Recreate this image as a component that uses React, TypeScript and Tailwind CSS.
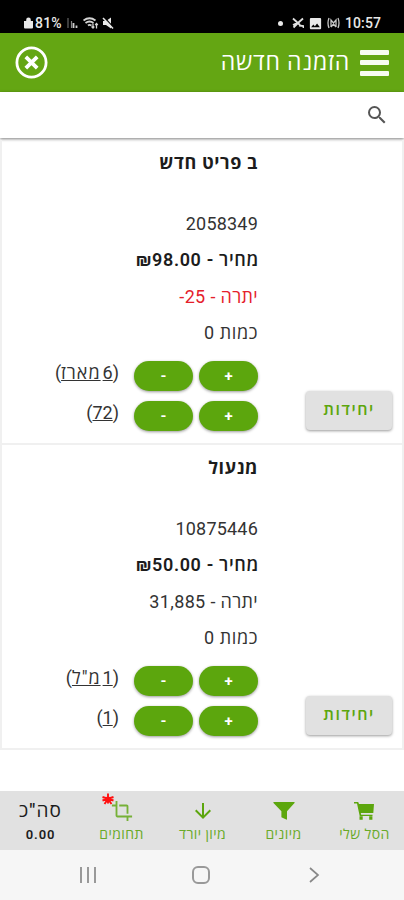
import { type ReactNode } from "react"
import { MdCrop, MdSearch, MdArrowDownward, MdImage } from "react-icons/md"

interface Pack {
  count: string
  unit?: string
}

interface Product {
  name: string
  sku: string
  price: string
  balance: string
  negative?: boolean
  packs: Pack[]
}

const products: Product[] = [
  {
    name: "ב פריט חדש",
    sku: "2058349",
    price: "₪98.00",
    balance: "25-",
    negative: true,
    packs: [{ count: "6", unit: "מארז" }, { count: "72" }],
  },
  {
    name: "מנעול",
    sku: "10875446",
    price: "₪50.00",
    balance: "31,885",
    packs: [{ count: "1", unit: 'מ"ל' }, { count: "1" }],
  },
]

function StatusBar() {
  return (
    <div dir="ltr" className="flex h-[33px] items-center justify-between bg-black pl-6 pr-[22px] pt-[13px] text-[14px] font-medium text-[#e8e8e8]">
      <div className="flex items-center">
        <svg width="9" height="12" viewBox="0 0 9 12" fill="#e8e8e8">
          <path d="M2.2 4V2.8a2.3 2.3 0 0 1 4.6 0V4H9v6.5a1 1 0 0 1-1 1H1a1 1 0 0 1-1-1V4z" />
        </svg>
        <span className="ml-[2px] w-[28px] tracking-[0.2px]">81%</span>
        <svg className="ml-[4px]" width="12" height="12" viewBox="0 0 12 12">
          <path d="M1 1v10" stroke="#666" strokeWidth="1.2" />
          <path d="M4.5 4v7" stroke="#888" strokeWidth="1.2" />
          <path d="M6.5 6v5M9.5 8.5v2.5" stroke="#ccc" strokeWidth="1.8" />
        </svg>
        <svg className="ml-[4px]" width="16" height="12" viewBox="0 0 16 12" fill="none" stroke="#d5d5d5">
          <path d="M0.5 3.5q6-4.5 12 0M2.5 6q4-3 8 0M5 8.5q1.5-1.3 3.5 0" strokeWidth="1.8" />
          <path d="M10 6.5v5M8.5 9.5l1.5 1.5 1.3-1.5M13.5 11.5V6.5M12.2 8l1.3-1.5L14.8 8" strokeWidth="1.3" />
        </svg>
        <svg className="ml-[3px]" width="12" height="12" viewBox="0 0 12 12">
          <path d="M1 4h3l5-3.5v11L4 8H1z" fill="#e8e8e8" />
          <path d="m2 0 10 11" stroke="black" strokeWidth="1.2" />
          <path d="m1 1 10 10.5" stroke="#e8e8e8" strokeWidth="1.5" />
        </svg>
      </div>
      <div className="flex items-center">
        <span className="size-[5px] rounded-full bg-[#e8e8e8]" />
        <svg className="ml-[9px]" width="12" height="12" viewBox="0 0 12 12" fill="none" stroke="#e0e0e0" strokeWidth="1.8">
          <path d="M1 1.5 8 8M11 1.5 6.5 5.5 1.5 10.5M1 8l4-2M7 8.5l4.5.5v2" />
        </svg>
        <MdImage className="ml-[4px] size-[15px]" />
        <svg className="ml-[4px]" width="13" height="12" viewBox="0 0 13 12" fill="none" stroke="#c8c8c8" strokeWidth="1.3">
          <path d="M2 1Q0 6 2 11M11 1q2 5 0 10M4 10V3l2.5 3L9 3v7M4 10l2.5-3L9 10" />
        </svg>
        <span className="ml-[5px] w-[37px] tracking-[0.1px]">10:57</span>
      </div>
    </div>
  )
}

function Header() {
  return (
    <header className="flex h-[59px] items-center justify-between bg-[#64a613] px-[15px] text-white">
      <div className="flex items-center gap-[10px]">
        <div className="flex w-[29px] flex-col gap-[5.5px]">
          <span className="h-[5px] rounded-[1px] bg-[#f8fcf2]" />
          <span className="h-[5px] rounded-[1px] bg-[#f8fcf2]" />
          <span className="h-[5px] rounded-[1px] bg-[#f8fcf2]" />
        </div>
        <h1 className="text-[23px] leading-none tracking-[0.75px]">הזמנה חדשה</h1>
      </div>
      <svg width="33" height="33" viewBox="0 0 33 33" fill="none" stroke="white">
        <circle cx="16.5" cy="16.5" r="14.6" strokeWidth="2.8" />
        <path d="m10.8 10.8 11.4 11.4M22.2 10.8 10.8 22.2" strokeWidth="3.8" />
      </svg>
    </header>
  )
}

function RoundButton({ children }: { children: ReactNode }) {
  return (
    <button className="h-[30px] w-[59px] rounded-full bg-[#5ca60d] text-[15px] leading-[30px] font-bold text-white shadow-[0_1px_3px_rgba(0,0,0,0.4)]">
      {children}
    </button>
  )
}

function UnitsButton() {
  return (
    <button className="h-[39px] w-[86px] rounded-[4px] bg-[#e1e1e1] pb-[2px] text-[16px] font-semibold tracking-[1.5px] text-[#5ca60d] shadow-[0_1px_3px_rgba(0,0,0,0.4)]">
      יחידות
    </button>
  )
}

function ProductCard({ product }: { product: Product }) {
  return (
    <section className="relative h-[305px] border-x-2 border-b-2 border-[#f0f0f0] pr-[144px] text-[18px] text-[#333]">
      <div className="flex w-[204px] flex-col">
        <h2 className="mt-[5px] h-[61px] leading-[36px] font-bold tracking-[0.6px] text-[#1c1c1c]">{product.name}</h2>
        <div className="leading-[36.3px]">
          <p className="tracking-[0.2px]">{product.sku}</p>
          <p className="-mr-px font-semibold tracking-[0.65px] text-[#1c1c1c]">מחיר - {product.price}</p>
          <p className={product.negative ? "tracking-[0.35px] text-[#e5202b]" : "tracking-[0.35px]"}>יתרה - {product.balance}</p>
          <p className="tracking-[0.6px]">כמות 0</p>
        </div>
        <div className="mt-[10px] flex flex-col gap-[10px]">
          {product.packs.map((pack, i) => (
            <div key={i} className="flex h-[30px] items-center">
              <RoundButton>+</RoundButton>
              <div className="w-[6px]" />
              <RoundButton>-</RoundButton>
              <span className="mr-[15px] pb-[6px] leading-6 whitespace-nowrap">
                (<span className="underline">{pack.count}</span>
                {pack.unit && (
                  <span className="mr-[2px] inline-block tracking-[1px] underline">{pack.unit}</span>
                )}
                )
              </span>
            </div>
          ))}
        </div>
      </div>
      <div className="absolute right-[10px] bottom-[13px]">
        <UnitsButton />
      </div>
    </section>
  )
}

function CartIcon() {
  return (
    <svg width="21" height="20" viewBox="0 0 21 20" fill="currentColor">
      <path d="M0 1h4.2l.8 2H20l-.7 9H6.8l.4 1.8h11.3V15H5.7L3 2.5H0z" />
      <path d="M5.5 15.3h3.2v3.4H5.5zM15.2 15.3h3.2v3.4h-3.2z" />
    </svg>
  )
}

function FunnelIcon() {
  return (
    <svg width="22" height="20" viewBox="0 0 22 20" fill="currentColor">
      <path d="M.8 1h20.4q.8 0 .3.9L14 10.3v8q-.1.6-.8.3L8.4 16.2V10.3L.5 1.9Q0 1 .8 1z" />
    </svg>
  )
}

function Tab({ icon, label }: { icon: ReactNode; label: string }) {
  return (
    <div className="flex w-[81px] flex-col items-center pt-[8px] pl-[2px] text-[#5ca60d]">
      <div className="relative flex h-[24px] items-center">{icon}</div>
      <span className="text-[14px] leading-[22px] tracking-[0.4px] whitespace-nowrap text-[#69aa28]">{label}</span>
    </div>
  )
}

function BottomTabs() {
  return (
    <footer className="flex h-[59px] bg-[#e1e1e1]">
      <Tab icon={<CartIcon />} label="הסל שלי" />
      <Tab icon={<FunnelIcon />} label="מיונים" />
      <Tab icon={<MdArrowDownward className="size-[24px]" />} label="מיון יורד" />
      <Tab
        icon={
          <>
            <MdCrop className="size-[22px] opacity-80" />
            <svg className="absolute -top-[6px] right-[19px]" width="12" height="12" viewBox="0 0 12 12" stroke="#ff1010" strokeWidth="1.9">
              <path d="M6 .5v10M.5 4l11 3.5M11.5 4 .5 7.5M6 6 2.5 11M6 6l3.5 5" />
              <circle cx="6" cy="6" r="1.5" fill="#ff1010" />
            </svg>
          </>
        }
        label="תחומים"
      />
      <div className="flex w-[80px] flex-col items-center pt-[8px] pl-px text-[#1c1c1c]">
        <span className="text-[19px] leading-[24px] font-medium tracking-[1.1px]">סה"כ</span>
        <span className="text-[13px] leading-[24px] font-semibold tracking-[0.9px]">0.00</span>
      </div>
    </footer>
  )
}

function SystemNav() {
  return (
    <nav dir="ltr" className="flex h-[50px] items-center bg-[#f6f6f6] pl-[80px]">
      <div className="flex h-[16px] w-[16px] justify-between">
        <span className="w-[2px] bg-[#999]" />
        <span className="w-[2px] bg-[#999]" />
        <span className="w-[2px] bg-[#999]" />
      </div>
      <div className="ml-[96px] size-[18px] rounded-[6px] border-2 border-[#999]" />
      <svg className="ml-[99px]" width="11" height="18" viewBox="0 0 11 18" fill="none" stroke="#888" strokeWidth="1.7">
        <path d="m1 2 8 7-8 7" />
      </svg>
    </nav>
  )
}

export default function App() {
  return (
    <div dir="rtl" className="flex h-[900px] w-[404px] flex-col overflow-hidden bg-white font-[Roboto,'Open_Sans',sans-serif]">
      <StatusBar />
      <Header />
      <div className="flex h-[46px] shrink-0 items-center pr-[15px] shadow-[0_1px_3px_rgba(0,0,0,0.5)]">
        <MdSearch className="size-[24px] text-[#555]" />
      </div>
      <main className="flex-1 pt-[2px]">
        {products.map((product) => (
          <ProductCard key={product.sku} product={product} />
        ))}
      </main>
      <BottomTabs />
      <SystemNav />
    </div>
  )
}
